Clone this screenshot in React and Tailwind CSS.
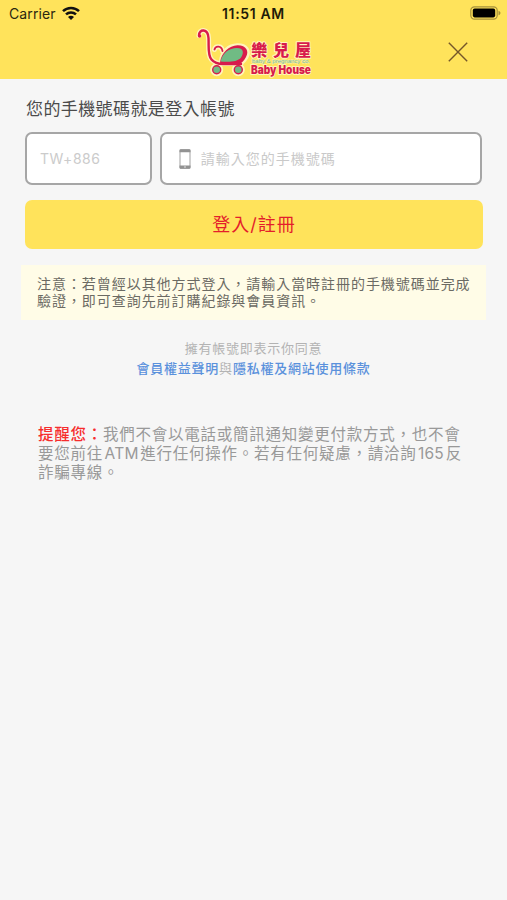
import React from "react";

function StatusBar() {
  return (
    <div className="relative flex h-[27px] items-center justify-between pl-[9px] pr-[6px] text-[14px] text-[#2b2710]">
      <div className="flex items-center gap-[6px]">
        <span className="w-[47px] whitespace-nowrap text-[14px] tracking-[0.1px]">Carrier</span>
        <svg className="relative -top-px" width="18" height="14" viewBox="0 0 18 14" fill="none" stroke="#111" strokeWidth="2.5">
          <path d="M1 5.2C5.4.9 12.6.9 17 5.2" />
          <path d="M4 8.4c2.8-2.7 7.2-2.7 10 0" />
          <path d="M6 10.9c1.7-1.6 4.3-1.6 6 0L9 14z" fill="#111" stroke="none" />
        </svg>
      </div>
      <span className="absolute left-[222px] top-[4px] whitespace-nowrap text-[14px] leading-[20px] font-semibold tracking-[0.65px] text-[#1f1b08]">11:51 AM</span>
      <svg className="relative -top-px" width="31" height="14" viewBox="0 0 31 14">
        <rect x=".8" y=".8" width="26.4" height="12.4" rx="3.6" fill="none" stroke="#a5913b" strokeWidth="1.2" />
        <rect x="2.8" y="2.6" width="22.4" height="8.8" rx="1.8" fill="#000" />
        <path d="M28.5 4.7c2.6.9 2.6 3.7 0 4.6z" fill="#a5913b" />
      </svg>
    </div>
  );
}

function Logo() {
  return (
    <svg className="block overflow-visible" width="118" height="52" viewBox="0 0 118 52">
      <g fill="none" stroke="#fff4bd" strokeWidth="5" strokeLinecap="round" strokeLinejoin="round">
        <path d="M3 8.5C3 1.5 12 1.5 12.5 11C13 20 11.5 28 15.5 32.5C18 35.5 22 36.5 27 36.5H45" />
        <path d="M18.5 22.5C19.5 18.5 26 18.5 26.5 24" />
        <path d="M25.5 34C26.5 25 33 19 41.5 18.8C50 18.7 53.5 24 50 30C48 33.5 46 35.5 43 36.5Z" />
        <circle cx="20.7" cy="42.7" r="4" />
        <circle cx="42.3" cy="42.7" r="4" />
      </g>
      <path d="M24 35.5C25.5 25 33 19 41.5 18.2C50 18 53.5 24 50 30C48 33.5 46 36 43 37H25Z" fill="#d81b4c" />
      <path d="M24.5 34.5C26.5 26 33 21.1 41 21C47.5 21 48.2 26 45 30.5C41.5 35 33 35.2 24.500 34.500Z" fill="#70bb84" />
      <g fill="none" stroke="#d81b4c" strokeWidth="2.4" strokeLinecap="round">
        <path d="M3 8.5C3 1.5 12 1.5 12.5 11C13 20 11.5 28 15.5 32.5C18 35.5 22 37 27 37H45" />
        <path d="M18.5 22.5C19.5 18.5 25.5 18.5 26.5 24" strokeWidth="1.8" />
      </g>
      <circle cx="3.6" cy="9" r="1.7" fill="#d81b4c" />
      <g fill="#70bb84" stroke="#d81b4c" strokeWidth="1.4">
        <circle cx="20.7" cy="42.7" r="4" />
        <circle cx="42.3" cy="42.7" r="4" />
      </g>
      <g stroke="#fff4bd" strokeWidth="2" paintOrder="stroke" strokeLinejoin="round">
        <text x="55.3 77 99" y="29" fontSize="16" fontWeight="900" fill="#d81b4c" fontFamily="Noto Sans CJK TC, sans-serif">樂兒屋</text>
        <text x="56" y="36" fontSize="5.5" fill="#6db486" strokeWidth=".8" textLength="58" lengthAdjust="spacingAndGlyphs" fontFamily="Liberation Sans, sans-serif">baby &amp; pregnancy co.</text>
        <text x="55" y="46.5" fontSize="11.5" fontWeight="900" fill="#d81b4c" textLength="60" lengthAdjust="spacingAndGlyphs" fontFamily="Inter, sans-serif">Baby House</text>
      </g>
    </svg>
  );
}

function Header() {
  return (
    <header className="h-[79px] bg-[#ffe35b]">
      <StatusBar />
      <div className="flex h-[52px] items-center justify-between pl-[196px] pr-[39px]">
        <Logo />
        <button aria-label="關閉" className="relative -top-px block">
          <svg className="block" width="20" height="20" viewBox="0 0 20 20" fill="none" stroke="#75572a" strokeWidth="1.4">
            <path d="M.8.8l18.4 18.4M19.2.8L.8 19.2" />
          </svg>
        </button>
      </div>
    </header>
  );
}

function PhoneIcon() {
  return (
    <svg width="12" height="20" viewBox="0 0 12 20">
      <rect x="1" y=".8" width="10" height="18.4" rx="1.2" fill="#fff" stroke="#aaa" strokeWidth="1.1" />
      <path d="M1.5 .3h9q1 0 1 1v1.9H.5V1.3q0-1 1-1zM.5 16.5h11v2.2q0 1-1 1h-9q-1 0-1-1z" fill="#929292" />
      <circle cx="6" cy="18" r=".7" fill="#fff" />
    </svg>
  );
}

export default function App() {
  return (
    <div className="h-[900px] w-[507px] overflow-hidden bg-[#f6f6f6] font-['Inter','Noto_Sans_CJK_TC',sans-serif]">
      <Header />
      <main className="px-[25px]">
        <h1 className="mt-[17px] h-[26px] whitespace-nowrap pl-px text-[17px] leading-[26px] font-normal tracking-[0.4px] text-[#4b4b4b]">您的手機號碼就是登入帳號</h1>
        <div className="mt-[10px] flex h-[53px] gap-[8px]">
          <div className="flex w-[127px] items-center rounded-[7px] border-2 border-[#a6a6a6] bg-white pl-[13px] text-[14px] tracking-[0.5px] text-[#cbcbcb]">TW+886</div>
          <div className="flex w-[323px] items-center gap-[10px] rounded-[7px] border-2 border-[#a6a6a6] bg-white pl-[17px] text-[14px] tracking-[1px] text-[#c9c9c9]">
            <PhoneIcon />
            <span>請輸入您的手機號碼</span>
          </div>
        </div>
        <button className="mt-[15px] block h-[49px] w-[458px] rounded-[7px] bg-[#ffe35b] text-[18px] leading-[50px] font-normal tracking-[1px] text-[#e41e2b]">登入/註冊</button>
        <p className="mt-[16px] -ml-[4px] h-[55px] w-[465px] whitespace-nowrap bg-[#fffce7] pt-[10px] pl-[16px] text-[14px] leading-[17px] tracking-[0.95px] text-[#6b6a63]">
          注意：若曾經以其他方式登入，請輸入當時註冊的手機號碼並完成<br />驗證，即可查詢先前訂購紀錄與會員資訊。
        </p>
        <p className="mt-[18px] text-center text-[13px] leading-[20px] tracking-[0.75px] text-[#b3b3b3]">
          擁有帳號即表示你同意<br />
          <a className="font-medium text-[#5a91dc]">會員權益聲明</a>與<a className="font-medium text-[#5a91dc]">隱私權及網站使用條款</a>
        </p>
        <p className="mt-[47px] ml-[13px] whitespace-nowrap text-[15.5px] leading-[19px] tracking-[0.75px] text-[#999]">
          <strong className="font-medium text-[#f62d2d]">提醒您：</strong>我們不會以電話或簡訊通知變更付款方式，也不會<br />
          要您前往<span className="mx-[1.5px] tracking-[0.3px]">ATM</span>進行任何操作。若有任何疑慮，請洽詢<span className="ml-[1.5px] mr-[2px] tracking-[0.1px]">165</span>反<br />
          詐騙專線。
        </p>
      </main>
    </div>
  );
}
